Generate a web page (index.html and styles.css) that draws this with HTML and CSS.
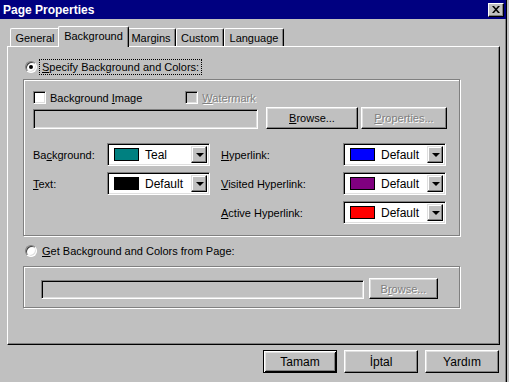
FILE: index.html
```html
<!DOCTYPE html>
<html lang="en">
  <head>
    <meta charset="UTF-8" />
    <title>Page Properties</title>
    <link rel="stylesheet" href="styles.css">
  </head>
  <body>
    <div class="window">
      <div class="title-bar">
        <span class="title">Page Properties</span>
        <a class="close" href="javascript:;">
          <svg width="8" height="7" viewBox="0 0 8 7">
            <path d="M0 0 L2 0 L8 7 L6 7 Z M6 0 L8 0 L2 7 L0 7 Z" fill="#000" />
          </svg>
        </a>
      </div>

      <!-- tabs -->
      <div class="tabs">
        <a class="tab t-general" href="javascript:;">General</a>
        <a class="tab t-background active" href="javascript:;">Background</a>
        <a class="tab t-margins" href="javascript:;">Margins</a>
        <a class="tab t-custom" href="javascript:;">Custom</a>
        <a class="tab t-language" href="javascript:;">Language</a>
      </div>

      <div class="panel">
        <div class="radio-row">
          <span class="radio checked"></span>
          <span class="focus"><u>S</u>pecify Background and Colors:</span>
        </div>

        <div class="group group-colors">
          <div class="check-row">
            <span class="check-item">
              <span class="checkbox"></span>
              <span>Background <u>I</u>mage</span>
            </span>
            <span class="check-item watermark">
              <span class="checkbox disabled"></span>
              <span class="disabled-text"><u>W</u>atermark</span>
            </span>
          </div>

          <div class="file-row">
            <span class="edit file-edit"></span>
            <a class="btn browse" href="javascript:;"><u>B</u>rowse...</a>
            <a class="btn props disabled-text" href="javascript:;"><u>P</u>roperties...</a>
          </div>

          <div class="colors">
            <span class="label">Ba<u>c</u>kground:</span>
            <div class="combo">
              <span class="swatch teal"></span>
              <span class="combo-text">Teal</span>
              <span class="drop"><i></i></span>
            </div>
            <span class="label right-label"><u>H</u>yperlink:</span>
            <div class="combo">
              <span class="swatch blue"></span>
              <span class="combo-text">Default</span>
              <span class="drop"><i></i></span>
            </div>

            <span class="label"><u>T</u>ext:</span>
            <div class="combo">
              <span class="swatch black"></span>
              <span class="combo-text">Default</span>
              <span class="drop"><i></i></span>
            </div>
            <span class="label right-label"><u>V</u>isited Hyperlink:</span>
            <div class="combo">
              <span class="swatch purple"></span>
              <span class="combo-text">Default</span>
              <span class="drop"><i></i></span>
            </div>

            <span></span>
            <span></span>
            <span class="label right-label"><u>A</u>ctive Hyperlink:</span>
            <div class="combo">
              <span class="swatch red"></span>
              <span class="combo-text">Default</span>
              <span class="drop"><i></i></span>
            </div>
          </div>
        </div>

        <div class="radio-row second">
          <span class="radio"></span>
          <span class="radio-label"><u>G</u>et Background and Colors from Page:</span>
        </div>

        <div class="group group-page">
          <span class="edit page-edit"></span>
          <a class="btn page-browse disabled-text" href="javascript:;">B<u>r</u>owse...</a>
        </div>
      </div>

      <div class="buttons">
        <a class="btn default" href="javascript:;">Tamam</a>
        <a class="btn" href="javascript:;">İptal</a>
        <a class="btn" href="javascript:;">Yardım</a>
      </div>
    </div>
  </body>
</html>
```

FILE: styles.css
```css
* {
  margin: 0;
  padding: 0;
  box-sizing: border-box;
}
body {
  background-color: #c0c0c0;
  font-family: "Liberation Sans", Arial, sans-serif;
  font-size: 11px;
  color: #000;
}
a {
  color: #000;
  text-decoration: none;
}
u {
  text-decoration: underline;
}
.window {
  width: 507px;
  height: 382px;
  border-right: 1px solid #000;
  box-shadow: inset -1px 0 #808080;
}
/*
  title bar
*/
.title-bar {
  height: 19px;
  background-color: #000080;
  display: flex;
  align-items: center;
  justify-content: space-between;
  padding: 0 2px 0 3px;
}
.title {
  color: #fff;
  font-weight: bold;
  font-size: 12px;
}
.close {
  width: 16px;
  height: 14px;
  background-color: #c0c0c0;
  border: 1px solid;
  border-color: #fff #000 #000 #fff;
  box-shadow: inset -1px -1px #808080;
  display: flex;
  align-items: center;
  justify-content: center;
}
/*
  tabs
*/
.tabs {
  display: flex;
  align-items: flex-end;
  height: 20px;
  margin-top: 7px;
  padding-left: 10px;
  position: relative;
  z-index: 2;
}
.tab {
  height: 18px;
  display: flex;
  align-items: center;
  justify-content: center;
  padding-top: 1px;
  border-top: 1px solid #fff;
  border-left: 1px solid #fff;
  border-right: 1px solid #000;
  border-radius: 2px 2px 0 0;
  box-shadow: inset -1px 0 #808080;
}
.t-general { width: 50px; }
.t-background { width: 67px; }
.t-margins { width: 49px; }
.t-custom { width: 48px; }
.t-language { width: 60px; }
.tab.active {
  width: 71px;
  height: 21px;
  margin: 0 -2px -1px;
  padding-top: 0;
  padding-bottom: 3px;
  background-color: #c0c0c0;
  position: relative;
  z-index: 3;
}
.tab.active + .tab {
  border-left: none;
}
/*
  tab panel
*/
.panel {
  margin-left: 7px;
  width: 493px;
  height: 299px;
  border: 1px solid;
  border-color: #fff #000 #000 #fff;
  box-shadow: inset -1px -1px #808080;
  padding: 10px 0 0 15px;
}
.radio-row {
  height: 20px;
  display: flex;
  align-items: center;
  padding-left: 2px;
}
.radio {
  width: 12px;
  height: 12px;
  border-radius: 50%;
  border: 1px solid;
  border-color: #808080 #fff #fff #808080;
  box-shadow: inset 1px 1px #404040, inset -1px -1px #dfdfdf;
  background-color: #fff;
  display: flex;
  align-items: center;
  justify-content: center;
  margin-right: 3px;
}
.radio.checked::after {
  content: "";
  width: 4px;
  height: 4px;
  border-radius: 50%;
  background-color: #000;
}
.focus {
  outline: 1px dotted #000;
  padding: 1px 2px;
}
.radio-label {
  padding-left: 2px;
}
.group {
  width: 437px;
  border: 1px solid #808080;
  box-shadow: inset 1px 1px #fff, 1px 1px #fff;
}
.group-colors {
  height: 157px;
  margin-top: 2px;
  padding: 10px 0 0 9px;
}
.check-row {
  display: flex;
  height: 15px;
  align-items: center;
}
.check-item {
  display: flex;
  align-items: center;
  gap: 4px;
}
.watermark {
  margin-left: 43px;
}
.checkbox {
  width: 13px;
  height: 13px;
  background-color: #fff;
  border: 1px solid;
  border-color: #808080 #fff #fff #808080;
  box-shadow: inset 1px 1px #000, inset -1px -1px #dfdfdf;
}
.checkbox.disabled {
  background-color: #c0c0c0;
}
.disabled-text {
  color: #808080;
  text-shadow: 1px 1px #fff;
}
/*
  sunken edit boxes and buttons
*/
.edit {
  display: block;
  border: 1px solid;
  border-color: #808080 #fff #fff #808080;
  box-shadow: inset 1px 1px #000, inset -1px -1px #dfdfdf;
  background-color: #c0c0c0;
}
.btn {
  display: flex;
  align-items: center;
  justify-content: center;
  border: 1px solid;
  border-color: #fff #000 #000 #fff;
  box-shadow: inset -1px -1px #808080, inset 1px 1px #dfdfdf;
  background-color: #c0c0c0;
}
.file-row {
  display: flex;
  align-items: center;
  margin-top: 2px;
  height: 22px;
}
.file-edit {
  width: 225px;
  height: 20px;
  margin-top: 2px;
}
.browse {
  width: 92px;
  height: 22px;
  margin-left: 8px;
}
.props {
  width: 86px;
  height: 22px;
  margin-left: 3px;
}
.colors {
  display: grid;
  grid-template-columns: 74px 103px 133px 103px;
  grid-auto-rows: 23px;
  row-gap: 6px;
  margin-top: 14px;
  align-items: center;
}
.right-label {
  padding-left: 11px;
}
.combo {
  height: 23px;
  display: flex;
  align-items: center;
  background-color: #fff;
  border: 1px solid;
  border-color: #808080 #fff #fff #808080;
  box-shadow: inset 1px 1px #000, inset -1px -1px #dfdfdf;
  padding: 2px;
}
.swatch {
  width: 25px;
  height: 13px;
  border: 1px solid #000;
  margin-left: 4px;
}
.teal { background-color: #008080; }
.blue { background-color: #0000ff; }
.black { background-color: #000; }
.purple { background-color: #800080; }
.red { background-color: #ff0000; }
.combo-text {
  flex: 1;
  padding-left: 6px;
  font-size: 12px;
}
.drop {
  width: 16px;
  height: 17px;
  background-color: #c0c0c0;
  border: 1px solid;
  border-color: #dfdfdf #000 #000 #dfdfdf;
  box-shadow: inset -1px -1px #808080, inset 1px 1px #fff;
  display: flex;
  align-items: center;
  justify-content: center;
}
.drop i {
  width: 0;
  height: 0;
  border-left: 4px solid transparent;
  border-right: 4px solid transparent;
  border-top: 4px solid #000;
  margin-left: 1px;
}
.radio-row.second {
  margin-top: 5px;
}
.group-page {
  height: 42px;
  margin-top: 5px;
  display: flex;
  align-items: center;
  padding: 3px 0 0 17px;
}
.page-edit {
  width: 323px;
  height: 19px;
  margin-top: 2px;
}
.page-browse {
  width: 69px;
  height: 21px;
  margin-left: 5px;
}
/*
  dialog buttons
*/
.buttons {
  display: flex;
  justify-content: flex-end;
  gap: 7px;
  padding: 5px 7px 0 0;
}
.buttons .btn {
  width: 74px;
  height: 23px;
  font-size: 12px;
}
.buttons .default {
  border-color: #000;
  box-shadow: inset 1px 1px #fff, inset -1px -1px #000, inset 2px 2px #dfdfdf, inset -2px -2px #808080;
}
```
